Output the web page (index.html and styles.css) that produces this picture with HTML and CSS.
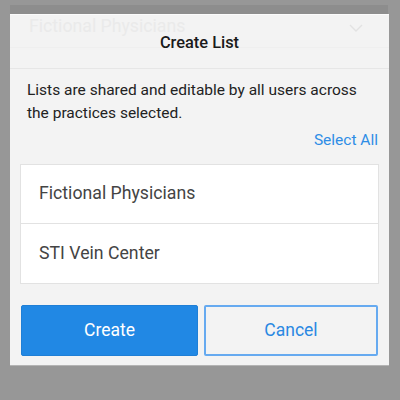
FILE: index.html
```html
<!DOCTYPE html>
<html>
<head>
<meta charset="utf-8">
<link rel="stylesheet" href="styles.css">
</head>
<body>
<div class="screen">
  <div class="strip"></div>
  <div class="modal">
    <div class="header">
      <div class="ghost">
        <span class="ghost-text">Fictional Physicians</span>
        <svg class="ghost-chev" width="14" height="8" viewBox="0 0 14 8"><path d="M1 1 L7 7 L13 1" fill="none" stroke="#e2e2e2" stroke-width="1.4"/></svg>
      </div>
      <div class="ghost-line"></div>
      <h1 class="title">Create List</h1>
    </div>
    <p class="desc">Lists are shared and editable by all users across the practices selected.</p>
    <div class="select-row"><span class="select-all">Select All</span></div>
    <ul class="list">
      <li class="item">Fictional Physicians</li>
      <li class="item">STI Vein Center</li>
    </ul>
    <div class="actions">
      <button class="btn btn-primary">Create</button>
      <button class="btn btn-secondary">Cancel</button>
    </div>
  </div>
</div>
</body>
</html>
```
FILE: styles.css
```css
html, body {
  margin: 0;
  padding: 0;
  background: #979797;
  width: 400px;
  height: 400px;
  overflow: hidden;
  font-family: Roboto, "Noto Sans", sans-serif;
}
.screen {
  padding: 5px 11px 0 10px;
}
.strip {
  height: 9px;
  background: #8d8d8d;
  margin-right: 1px;
}
.modal {
  background: #f3f3f3;
  border-top: 1px solid #fbfbfb;
  box-shadow: 0 1px 0 #b4b4b4;
  height: 350px;
  display: flex;
  flex-direction: column;
}
.header {
  position: relative;
  height: 53px;
  border-bottom: 1px solid #e6e6e6;
  display: flex;
  align-items: flex-start;
  justify-content: center;
}
.ghost {
  position: absolute;
  left: 19px;
  right: 26px;
  top: 2px;
  display: flex;
  justify-content: space-between;
  align-items: center;
}
.ghost-text {
  font-size: 17.7px;
  line-height: 18px;
  color: #eaeaea;
}
.ghost-chev {
  margin-top: 4px;
}
.ghost-line {
  position: absolute;
  left: 0;
  right: 0;
  top: 32px;
  height: 1px;
  background: #efefef;
}
.title {
  position: relative;
  margin: 18px 0 0;
  font-size: 16.4px;
  line-height: 19px;
  font-weight: 500;
  color: #1a1a1a;
}
.desc {
  margin: 10px 16px 0 17px;
  font-size: 15.5px;
  line-height: 22.5px;
  color: #222;
}
.select-row {
  display: flex;
  justify-content: flex-end;
  padding-right: 11px;
  margin-top: 5px;
}
.select-all {
  font-size: 15.5px;
  color: #2e8de6;
  line-height: 22px;
}
.list {
  list-style: none;
  margin: 13px 10px 0 10px;
  padding: 0;
  background: #fff;
  border: 1px solid #e2e2e2;
}
.item {
  height: 58px;
  display: flex;
  align-items: center;
  padding-left: 18px;
  padding-bottom: 2px;
  box-sizing: border-box;
  font-size: 17.7px;
  color: #444;
}
.item + .item {
  border-top: 1px solid #e2e2e2;
  height: 60px;
}
.actions {
  display: flex;
  gap: 6px;
  margin: 21px 11px 0 11px;
}
.btn {
  height: 51px;
  border-radius: 2px;
  font-family: Roboto, "Noto Sans", sans-serif;
  font-size: 17.5px;
  padding: 0;
  padding-bottom: 1px;
}
.btn-primary {
  flex: 0 0 177px;
  background: #2188e4;
  border: 1px solid #1f7fd6;
  color: #fff;
}
.btn-secondary {
  flex: 1;
  background: #f3f3f3;
  border: 2px solid #66aaf0;
  color: #2a88e2;
}
```
